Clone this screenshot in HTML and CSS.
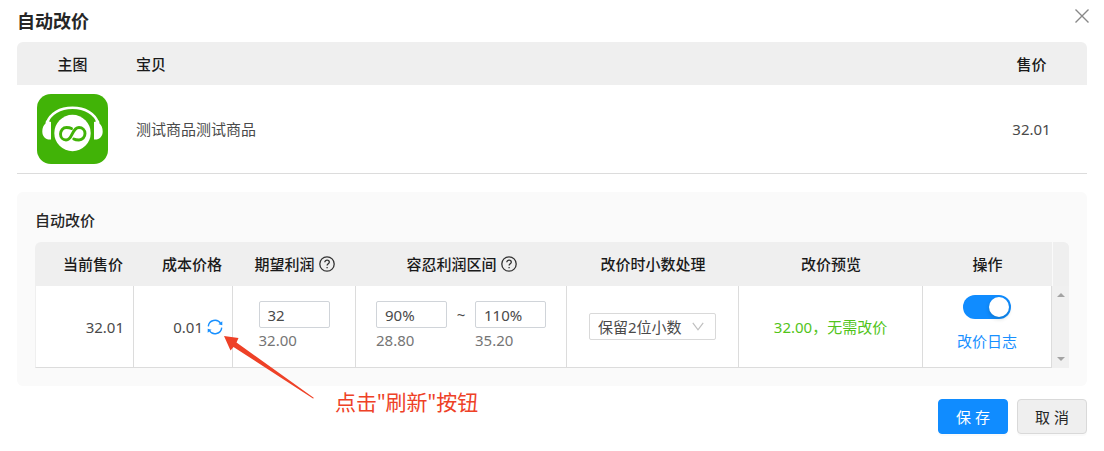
FILE: index.html
```html
<!DOCTYPE html>
<html lang="zh-CN">
<head>
    <meta charset="UTF-8">
    <meta name="viewport" content="width=device-width, initial-scale=1.0">
    <title>自动改价</title>
    <link rel="stylesheet" href="styles.css">
</head>
<body>
    <div class="dialog">
        <div class="dialog-header">
            <h1 class="dialog-title">自动改价</h1>
            <button class="close-btn" type="button" aria-label="关闭">
                <svg width="14" height="14" viewBox="0 0 14 14"><path d="M.5.5l13 13M13.5.5l-13 13" fill="none" stroke="#888" stroke-width="1.4"/></svg>
            </button>
        </div>

        <table class="goods-table">
            <thead>
                <tr>
                    <th class="goods-pic">主图</th>
                    <th class="goods-name">宝贝</th>
                    <th class="goods-price">售价</th>
                </tr>
            </thead>
            <tbody>
                <tr>
                    <td class="goods-pic">
                        <svg class="goods-logo" width="71" height="70" viewBox="0 0 71 70">
                            <rect width="71" height="70" rx="14" fill="#41b307"/>
                            <path d="M10 29C13 19.500 23 13.800 35.500 13.800S58 19.500 61 29" fill="none" stroke="#fff" stroke-width="2.600"/>
                            <path d="M9 26.500L14 28V45.500C8.500 46 5.300 42.500 5.300 37.500C5.300 34 6.500 31 8.500 29.500z" fill="#fff"/>
                            <path d="M62 26.500L57 28V45.500C62.500 46 65.700 42.500 65.700 37.500C65.700 34 64.500 31 62.500 29.500z" fill="#fff"/>
                            <circle cx="35.500" cy="39" r="18.200" fill="#fff"/>
                            <path d="M34.500 34.500C33 33.700 31 33.500 29.500 33.500C26 33.500 23.500 36.500 23.500 40C23.500 43.500 26 46 29 46C36 46 34.500 33.500 42 33.500C45.500 33.500 48 36 48 39.500C48 43 45.500 46 42 46C40 46 38.200 45.800 36.800 45" fill="none" stroke="#41b307" stroke-width="2.900" stroke-linecap="round"/>
                        </svg>
                    </td>
                    <td class="goods-name">测试商品测试商品</td>
                    <td class="goods-price">32.01</td>
                </tr>
            </tbody>
        </table>

        <div class="panel">
            <h2 class="panel-title">自动改价</h2>
            <div class="rule-box">
                <table class="rule-table">
                    <thead>
                        <tr>
                            <th class="col-price">当前售价</th>
                            <th class="col-cost">成本价格</th>
                            <th class="col-profit"><span class="th-label">期望利润
                                <svg class="help" viewBox="0 0 16 16"><circle cx="8" cy="8" r="7.200"/><path d="M5.800 6.300C5.800 3.300 10.300 3.400 10.300 6.200C10.300 7.800 8.100 7.900 8.100 9.600M8.100 11v1.300"/></svg>
                            </span></th>
                            <th class="col-range"><span class="th-label">容忍利润区间
                                <svg class="help" viewBox="0 0 16 16"><circle cx="8" cy="8" r="7.200"/><path d="M5.800 6.300C5.800 3.300 10.300 3.400 10.300 6.200C10.300 7.800 8.100 7.900 8.100 9.600M8.100 11v1.300"/></svg>
                            </span></th>
                            <th class="col-decimal">改价时小数处理</th>
                            <th class="col-preview">改价预览</th>
                            <th class="col-action">操作</th>
                        </tr>
                    </thead>
                    <tbody>
                        <tr>
                            <td class="col-price">32.01</td>
                            <td class="col-cost">
                                <div class="cost">
                                    <span>0.01</span>
                                    <button class="refresh-btn" type="button" aria-label="刷新">
                                        <svg width="16" height="16" viewBox="0 0 16 16">
                                            <path d="M1.300 7.400A6.700 6.700 0 0 1 13.700 4.500M14.700 8.600A6.700 6.700 0 0 1 2.300 11.500" fill="none" stroke="#1890ff" stroke-width="1.400"/>
                                            <path d="M15.300 2.200v4l-3.900-1zM.7 13.800v-4l3.900 1z" fill="#1890ff"/>
                                        </svg>
                                    </button>
                                </div>
                            </td>
                            <td class="col-profit">
                                <div class="fields">
                                    <div class="field">
                                        <input class="field-input" type="text" value="32" aria-label="期望利润">
                                        <span class="field-hint">32.00</span>
                                    </div>
                                </div>
                            </td>
                            <td class="col-range">
                                <div class="fields">
                                    <div class="field">
                                        <input class="field-input" type="text" value="90%" aria-label="容忍利润区间下限">
                                        <span class="field-hint">28.80</span>
                                    </div>
                                    <span class="tilde">~</span>
                                    <div class="field">
                                        <input class="field-input" type="text" value="110%" aria-label="容忍利润区间上限">
                                        <span class="field-hint">35.20</span>
                                    </div>
                                </div>
                            </td>
                            <td class="col-decimal">
                                <div class="select-box">
                                    <select class="select" aria-label="改价时小数处理">
                                        <option>保留2位小数</option>
                                    </select>
                                    <svg class="select-arrow" width="12" height="9" viewBox="0 0 12 9"><path d="M.8.8L6 7.800L11.200.8" fill="none" stroke="#bfbfbf" stroke-width="1.200"/></svg>
                                </div>
                            </td>
                            <td class="col-preview">32.00，无需改价</td>
                            <td class="col-action">
                                <div class="actions">
                                    <input class="switch" type="checkbox" checked aria-label="自动改价">
                                    <a class="log-link" href="#">改价日志</a>
                                </div>
                            </td>
                        </tr>
                    </tbody>
                </table>
                <div class="scrollbar">
                    <div class="scrollbar-head"></div>
                    <div class="scrollbar-track">
                        <span class="arrow-up"></span>
                        <span class="arrow-down"></span>
                    </div>
                </div>
            </div>

            <div class="tip">
                <svg class="tip-arrow" width="92" height="64" viewBox="0 0 92 64"><path d="M1 1L15.500 3L13.500 7.500L91 63L90 63.500L10.500 12L7.500 15.500z" fill="#ee4127"/></svg>
                <span class="tip-text">点击"刷新"按钮</span>
            </div>
        </div>

        <div class="dialog-footer">
            <button class="btn btn-primary" type="button">保 存</button>
            <button class="btn" type="button">取 消</button>
        </div>
    </div>
</body>
</html>
```

FILE: styles.css
```css
* {
    box-sizing: border-box;
}
body {
    margin: 0;
    background: #fff;
    color: #262626;
    font-family: "Noto Sans", "Noto Sans CJK SC", sans-serif;
    font-size: 15px;
    line-height: 20px;
}
button, input, select {
    font: inherit;
    color: inherit;
    margin: 0;
}
.dialog {
    padding: 0 17px 17px;
}

/* header */
.dialog-header {
    display: flex;
    justify-content: space-between;
    align-items: flex-start;
    height: 42px;
    padding-top: 9px;
}
.dialog-title {
    margin: 0;
    font-size: 18px;
    line-height: 24px;
    font-weight: 700;
}
.close-btn {
    display: flex;
    padding: 0;
    margin-right: -2px;
    border: none;
    background: none;
    cursor: pointer;
}

/* tables */
table {
    width: 100%;
    table-layout: fixed;
    border-collapse: separate;
    border-spacing: 0;
}
th {
    padding: 0;
    background: #efefef;
    font-weight: 500;
    color: #1a1a1a;
}
td {
    padding: 0;
    color: #4a4a4a;
}
.goods-table th {
    height: 43px;
}
.goods-table td {
    height: 89px;
    border-bottom: 1px solid #dcdcdc;
}
.goods-table th:first-child {
    border-top-left-radius: 6px;
}
.goods-table th:last-child {
    border-top-right-radius: 6px;
}
.goods-pic {
    width: 111px;
    text-align: center;
}
.goods-table .goods-name {
    padding-left: 8px;
    text-align: left;
}
.goods-price {
    width: 111px;
    text-align: center;
}
.goods-logo {
    display: block;
    margin: 0 auto;
}

/* rule panel */
.panel {
    position: relative;
    margin-top: 18px;
    padding: 18px;
    border-radius: 6px;
    background: #fafafa;
}
.panel-title {
    margin: 0 0 12px;
    font-size: 15px;
    line-height: 20px;
    font-weight: 500;
}
.rule-box {
    display: flex;
    border-radius: 6px 6px 0 0;
    overflow: hidden;
}
.rule-table {
    flex: 1;
    min-width: 0;
}
.rule-table th {
    height: 44px;
}
.rule-table td {
    height: 82px;
    background: #fff;
    border-right: 1px solid #dcdcdc;
    border-bottom: 1px solid #dcdcdc;
    text-align: center;
}
.rule-table td:first-child {
    border-left: 1px solid #efefef;
}
.rule-table .col-price,
.rule-table .col-cost {
    width: 99px;
    padding-right: 9px;
    text-align: right;
}
.rule-table th.col-price,
.rule-table th.col-cost {
    padding-right: 11px;
}
.col-profit { width: 123px; }
.col-range { width: 211px; }
.col-decimal { width: 172px; }
.col-preview { width: 184px; }
.col-action { width: 129px; }
.rule-table td.col-preview {
    color: #52c41a;
}
.th-label {
    display: flex;
    justify-content: center;
    align-items: center;
    gap: 4px;
}
.help {
    width: 16px;
    height: 16px;
    fill: none;
    stroke: #333;
    stroke-width: 1.3;
}
.cost {
    display: flex;
    justify-content: flex-end;
    align-items: center;
    gap: 4px;
}
.refresh-btn {
    display: flex;
    padding: 0;
    border: none;
    background: none;
    cursor: pointer;
}
.fields {
    display: flex;
    justify-content: center;
}
.field {
    display: flex;
    flex-direction: column;
    width: 71px;
    text-align: left;
}
.field-input {
    width: 100%;
    height: 27px;
    padding: 0 8px;
    border: 1px solid #d0d4d9;
    border-radius: 2px;
    background: #fff;
    outline: none;
}
.field-hint {
    line-height: 24px;
    color: #757575;
}
.tilde {
    width: 28px;
    line-height: 27px;
    text-align: center;
}
.select-box {
    position: relative;
    width: 127px;
    margin: 0 auto;
}
.select {
    display: block;
    width: 100%;
    height: 27px;
    padding: 0 8px;
    border: 1px solid #d9d9d9;
    border-radius: 2px;
    background: #fff;
    appearance: none;
    outline: none;
}
.select-arrow {
    position: absolute;
    top: 9px;
    right: 12px;
    pointer-events: none;
}
.actions {
    display: flex;
    flex-direction: column;
    align-items: center;
    gap: 12px;
    padding-bottom: 8px;
}
.switch {
    appearance: none;
    display: flex;
    width: 48px;
    height: 24px;
    padding: 2px;
    border-radius: 12px;
    background: #bfbfbf;
    cursor: pointer;
}
.switch:checked {
    justify-content: flex-end;
    background: #108cff;
}
.switch::before {
    content: "";
    width: 20px;
    height: 20px;
    border-radius: 50%;
    background: #fff;
    box-shadow: 0 2px 4px rgba(0, 35, 11, 0.2);
}
.log-link {
    color: #1890ff;
    text-decoration: none;
}

/* scrollbar next to the rule table */
.scrollbar {
    display: flex;
    flex-direction: column;
    width: 17px;
    background: #f0f0f0;
}
.scrollbar-head {
    height: 44px;
    border-left: 1px solid #fafafa;
    background: #efefef;
}
.scrollbar-track {
    flex: 1;
    display: flex;
    flex-direction: column;
    justify-content: space-between;
    align-items: center;
    padding: 7px 0;
}
.arrow-up,
.arrow-down {
    border-left: 4px solid transparent;
    border-right: 4px solid transparent;
}
.arrow-up {
    border-bottom: 4px solid #a3a3a3;
}
.arrow-down {
    border-top: 4px solid #a3a3a3;
}

/* note that points at the refresh button */
.tip {
    position: absolute;
    left: 206px;
    top: 143px;
    display: flex;
    align-items: flex-start;
    gap: 20px;
    pointer-events: none;
}
.tip-text {
    padding-top: 53px;
    font-size: 21px;
    line-height: 28px;
    color: #ee4127;
}

/* footer */
.dialog-footer {
    display: flex;
    justify-content: flex-end;
    gap: 9px;
    margin-top: 13px;
}
.btn {
    width: 70px;
    height: 35px;
    padding: 0;
    border: 1px solid #d9d9d9;
    border-radius: 4px;
    background: #efefef;
    box-shadow: 0 2px 0 rgba(0, 0, 0, 0.02);
    cursor: pointer;
}
.btn-primary {
    border-color: #108cff;
    background: #108cff;
    color: #fff;
}
```
